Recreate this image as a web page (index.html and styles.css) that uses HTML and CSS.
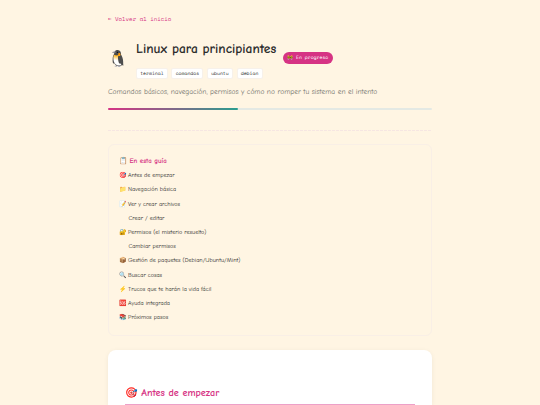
FILE: index.html
```html
<!DOCTYPE html>
<html lang="es">
<head>
  <meta charset="UTF-8" />
  <meta name="viewport" content="width=device-width, initial-scale=1.0"/>
  <title>Linux para principiantes</title>
  <link rel="stylesheet" href="styles.css">
</head>
<body>
  <main class="container">
    <a href="#" class="back-link">← Volver al inicio</a>

    <header class="guide-header">
      <div class="guide-icon">🐧</div>
      <div class="guide-title">
        <h1>Linux para principiantes</h1>
        <div class="tags">
          <span class="tag">terminal</span>
          <span class="tag">comandos</span>
          <span class="tag">ubuntu</span>
          <span class="tag">debian</span>
        </div>
      </div>
      <div class="status"><span class="status-icon">🚧</span><span>En progreso</span></div>
    </header>

    <p class="description">Comandos básicos, navegación, permisos y cómo no romper tu sistema en el intento</p>
    <div class="progress"><div class="progress-fill" style="width: 40%"></div></div>
    <div class="divider"></div>

    <nav class="toc">
      <h2><span class="emoji">📋</span><span>En esta guía</span></h2>
      <ul>
        <li><span class="emoji">🎯</span><a href="#antes">Antes de empezar</a></li>
        <li><span class="emoji">📁</span><a href="#nav">Navegación básica</a></li>
        <li><span class="emoji">📝</span><a href="#archivos">Ver y crear archivos</a></li>
        <li class="sub"><a href="#editar">Crear / editar</a></li>
        <li><span class="emoji">🔐</span><a href="#permisos">Permisos (el misterio resuelto)</a></li>
        <li class="sub"><a href="#cambiar">Cambiar permisos</a></li>
        <li><span class="emoji">📦</span><a href="#paquetes">Gestión de paquetes (Debian/Ubuntu/Mint)</a></li>
        <li><span class="emoji">🔍</span><a href="#buscar">Buscar cosas</a></li>
        <li><span class="emoji">⚡</span><a href="#trucos">Trucos que te harán la vida fácil</a></li>
        <li><span class="emoji">🆘</span><a href="#ayuda">Ayuda integrada</a></li>
        <li><span class="emoji">📚</span><a href="#pasos">Próximos pasos</a></li>
      </ul>
    </nav>

    <section class="card" id="antes">
      <h2><span class="emoji">🎯</span><span>Antes de empezar</span></h2>
    </section>
  </main>
</body>
</html>
```
FILE: styles.css
```css
* {
  box-sizing: border-box;
  margin: 0;
  padding: 0;
}

body {
  background: #fff5e3;
  color: #2d2d2d;
  font-family: "Comic Neue", Lato, sans-serif;
  text-rendering: geometricPrecision;
}

.container {
  display: flex;
  flex-direction: column;
  width: 324px;
  height: 405px;
  margin: 0 auto;
  padding-top: 16px;
}

.back-link {
  height: 9px;
  line-height: 9px;
  color: #d63384;
  font-family: "Space Mono", "Liberation Mono", monospace;
  font-size: 5.75px;
  text-decoration: none;
}

.guide-header {
  display: flex;
  align-items: center;
  height: 43px;
  margin-top: 12px;
}

.guide-icon {
  width: 28px;
  padding-left: 0.5px;
  font-size: 16px;
  line-height: 20px;
}

.guide-title {
  width: 146.5px;
}

.guide-title h1 {
  height: 18px;
  margin-top: 2px;
  font-size: 13.5px;
  line-height: 18px;
  white-space: nowrap;
}

.tags {
  display: flex;
  gap: 3.6px;
  margin-top: 9px;
}

.tag {
  height: 11px;
  padding: 0 3.2px;
  border: 1px solid #f7f1ea;
  border-radius: 2px;
  background: #fff;
  font-family: "Space Mono", "Liberation Mono", monospace;
  font-size: 4.8px;
  line-height: 9px;
}

.status {
  display: flex;
  align-items: center;
  gap: 2.5px;
  width: 50.5px;
  height: 12px;
  margin-bottom: 2px;
  padding: 0 5px;
  border-radius: 6px;
  background: #d63384;
  color: #fff;
  font-family: "Space Mono", "Liberation Mono", monospace;
  font-size: 4.8px;
  white-space: nowrap;
}

.description {
  height: 12px;
  margin-top: 6px;
  color: #72726c;
  font-size: 7.43px;
  line-height: 12px;
  white-space: nowrap;
}

.progress {
  height: 2px;
  margin-top: 10px;
  border-radius: 1px;
  background: #e4e9e4;
}

.progress-fill {
  height: 2px;
  border-radius: 1px;
  background: linear-gradient(90deg, #d63384, #2a9d8f);
}

.divider {
  height: 1px;
  margin-top: 20px;
  background: repeating-linear-gradient(90deg, #f6e6e2 0 3px, transparent 3px 4px);
}

.toc {
  height: 192px;
  margin-top: 13px;
  padding: 10.5px 10px;
  border: 1px solid #f9efe6;
  border-radius: 6px;
}

.toc h2 {
  display: flex;
  height: 11px;
  color: #d63384;
  font-size: 6.9px;
  line-height: 11px;
}

.toc h2 .emoji {
  width: 10.5px;
}

.toc ul {
  margin-top: 2.7px;
  list-style: none;
}

.toc li {
  display: flex;
  height: 14.2px;
  font-size: 6.07px;
  line-height: 14.2px;
}

.toc a {
  color: #2d2d2d;
  text-decoration: none;
  white-space: nowrap;
}

.toc .emoji {
  width: 9px;
}

.toc .sub {
  padding-left: 9.5px;
}

.card {
  flex: 1;
  margin-top: 14px;
  padding: 34px 17px 0;
  border-radius: 8px 8px 0 0;
  background: #fff;
  box-shadow: 0 1px 5px rgba(0, 0, 0, 0.06);
}

.card h2 {
  display: flex;
  height: 21px;
  border-bottom: 1px solid #eda0c8;
  color: #d63384;
  font-size: 10.2px;
  line-height: 18px;
}

.card .emoji {
  width: 16.3px;
}
```
